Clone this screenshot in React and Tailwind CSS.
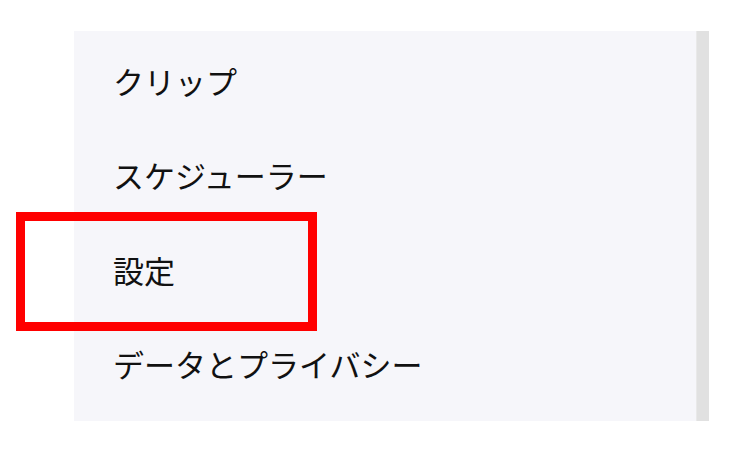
import React from "react";

const items = ["クリップ", "スケジューラー", "設定", "データとプライバシー"];

export default function App() {
  return (
    <div
      className="relative w-[731px] h-[450px] bg-white overflow-hidden"
      style={{ fontFamily: '"Noto Sans CJK JP", "Noto Sans", sans-serif' }}
    >
      <div className="flex ml-[74px] mt-[31px] h-[390px] w-[635px]">
        <div className="flex-1 bg-[#f6f6fa] pt-[2px]">
          {items.map((t) => (
            <div key={t} className="h-[94.5px] flex items-center pl-[39px]">
              <span className="text-[31px] leading-none font-normal text-[#111111]">{t}</span>
            </div>
          ))}
        </div>
        <div className="w-[13px] bg-[#e1e1e1] border-l border-l-[#e9e9e9]" />
      </div>
      <div className="absolute left-[16px] top-[212px] w-[301px] h-[119px] border-[9px] border-[#ff0000]" />
    </div>
  );
}
